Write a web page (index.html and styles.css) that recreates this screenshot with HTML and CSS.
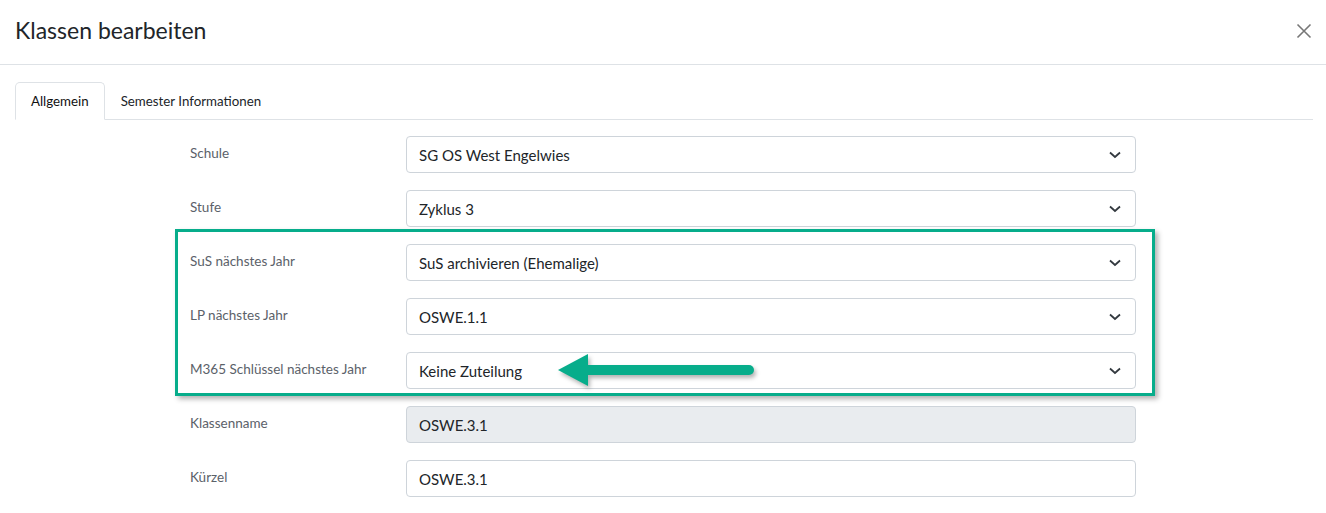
FILE: index.html
```html
<!DOCTYPE html>
<html lang="de">
<head>
    <meta charset="UTF-8">
    <meta name="viewport" content="width=device-width, initial-scale=1.0">
    <title>Klassen bearbeiten</title>
    <link rel="stylesheet" href="styles.css">
</head>
<body>

<!-- Kopfzeile -->
<div class="modal-header">
    <h2>Klassen bearbeiten</h2>
    <button class="close" aria-label="Schliessen">
        <svg width="16" height="16" viewBox="0 0 16 16"><path d="M1.5 1.5 L14.5 14.5 M14.5 1.5 L1.5 14.5" stroke="#777" stroke-width="1.6" fill="none"/></svg>
    </button>
</div>

<div class="modal-body">
    <!-- Tabs -->
    <ul class="tabs">
        <li class="active">Allgemein</li>
        <li>Semester Informationen</li>
    </ul>

    <!-- Formular -->
    <form class="form">
        <div class="row">
            <label>Schule</label>
            <div class="select">SG OS West Engelwies</div>
        </div>
        <div class="row">
            <label>Stufe</label>
            <div class="select">Zyklus 3</div>
        </div>
        <div class="row">
            <label>SuS nächstes Jahr</label>
            <div class="select">SuS archivieren (Ehemalige)</div>
        </div>
        <div class="row">
            <label>LP nächstes Jahr</label>
            <div class="select">OSWE.1.1</div>
        </div>
        <div class="row">
            <label>M365 Schlüssel nächstes Jahr</label>
            <div class="select">Keine Zuteilung</div>
        </div>
        <div class="row">
            <label>Klassenname</label>
            <div class="input disabled">OSWE.3.1</div>
        </div>
        <div class="row">
            <label>Kürzel</label>
            <div class="input">OSWE.3.1</div>
        </div>

        <!-- Markierung -->
        <div class="highlight"></div>
        <svg class="arrow" width="204" height="40" viewBox="0 0 204 40">
            <path d="M3 18 L33 2 L33 34 Z" fill="#07ad8b"/>
            <line x1="30" y1="18" x2="194" y2="18" stroke="#07ad8b" stroke-width="10" stroke-linecap="round"/>
        </svg>
    </form>
</div>

</body>
</html>
```

FILE: styles.css
```css
body {
    font-family: Lato, "Open Sans", sans-serif;
    color: #212529;
    background: #fff;
    margin: 0;
    padding: 0;
}

.modal-header {
    display: flex;
    align-items: center;
    justify-content: space-between;
    height: 64px;
    padding: 0 12px 0 15px;
    border-bottom: 1px solid #dee2e6;
}
.modal-header h2 {
    margin: 0 0 4px 0;
    font-size: 23px;
    font-weight: 400;
    color: #212529;
}
.close {
    background: none;
    border: none;
    padding: 0;
    width: 20px;
    height: 20px;
    display: flex;
    align-items: center;
    justify-content: center;
    margin-bottom: 3px;
}

.modal-body {
    padding: 17px 13px 0 15px;
}

.tabs {
    display: flex;
    list-style: none;
    margin: 0;
    padding: 0;
    border-bottom: 1px solid #dee2e6;
    font-size: 13.3px;
}
.tabs li {
    padding: 0 15px;
    height: 36px;
    line-height: 37px;
    border: 1px solid transparent;
    border-top-left-radius: 5px;
    border-top-right-radius: 5px;
    margin-bottom: -1px;
    color: #212529;
}
.tabs li.active {
    border-color: #dee2e6 #dee2e6 #fff;
    background: #fff;
    color: #111;
}

.form {
    position: relative;
    width: 946px;
    margin: 16px 0 0 175px;
    display: flex;
    flex-direction: column;
    gap: 17px;
}
.row {
    display: flex;
    align-items: center;
}
.row label {
    width: 216px;
    font-size: 13.5px;
    color: #5b6169;
    margin-bottom: 3px;
}
.select, .input {
    flex: 1;
    box-sizing: border-box;
    height: 37px;
    border: 1px solid #ced4da;
    border-radius: 4px;
    padding: 1px 12px 0 12px;
    display: flex;
    align-items: center;
    font-size: 15px;
    color: #212529;
}
.select {
    background: #fff url("data:image/svg+xml,%3Csvg xmlns='http://www.w3.org/2000/svg' width='12' height='8' viewBox='0 0 12 8'%3E%3Cpath d='M1 1.5 L6 6 L11 1.5' stroke='%23343a40' stroke-width='1.8' fill='none'/%3E%3C/svg%3E") no-repeat right 14px center;
}
.input.disabled {
    background: #e9ecef;
}

.highlight {
    position: absolute;
    left: -15px;
    top: 93px;
    width: 974px;
    height: 161px;
    border: 3px solid #07ad8b;
    box-shadow: 3px 3px 5px rgba(0, 0, 0, 0.3);
    pointer-events: none;
}
.arrow {
    position: absolute;
    left: 365px;
    top: 216px;
    filter: drop-shadow(2px 3px 2px rgba(0, 0, 0, 0.3));
}
```
